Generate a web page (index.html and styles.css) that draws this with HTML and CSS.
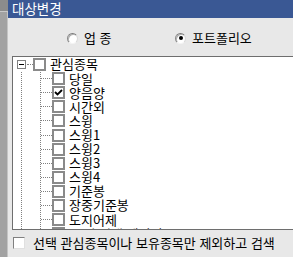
FILE: index.html
```html
<!DOCTYPE html>
<html lang="ko">
<head>
<meta charset="utf-8">
<link rel="stylesheet" href="styles.css">
</head>
<body>
<div class="screen">
  <div class="side"><div class="side-top"></div><div class="side-body"></div></div>
  <div class="dialog">
    <div class="titlebar">대상변경</div>
    <div class="radios">
      <label class="radio first"><span class="rb"></span><span class="rlbl">업 종</span></label>
      <label class="radio"><span class="rb on"></span><span class="rlbl">포트폴리오</span></label>
    </div>
    <div class="treebox">
      <div class="row top">
        <span class="expander"><span class="minus"></span></span>
        <span class="hconn short"></span>
        <span class="cb"></span>
        <span class="lbl">관심종목</span>
      </div>
      <div class="branch">
        <div class="trunk"></div>
        <div class="children">
          <div class="row"><span class="hconn"></span><span class="cb"></span><span class="lbl">당일</span></div>
          <div class="row"><span class="hconn"></span><span class="cb"><svg viewBox="0 0 9 9" width="9" height="9"><path d="M1 4 L3.5 6.5 L8 2" fill="none" stroke="#000" stroke-width="1.8"/></svg></span><span class="lbl">양음양</span></div>
          <div class="row"><span class="hconn"></span><span class="cb"></span><span class="lbl">시간외</span></div>
          <div class="row"><span class="hconn"></span><span class="cb"></span><span class="lbl">스윙</span></div>
          <div class="row"><span class="hconn"></span><span class="cb"></span><span class="lbl">스윙1</span></div>
          <div class="row"><span class="hconn"></span><span class="cb"></span><span class="lbl">스윙2</span></div>
          <div class="row"><span class="hconn"></span><span class="cb"></span><span class="lbl">스윙3</span></div>
          <div class="row"><span class="hconn"></span><span class="cb"></span><span class="lbl">스윙4</span></div>
          <div class="row"><span class="hconn"></span><span class="cb"></span><span class="lbl">기준봉</span></div>
          <div class="row"><span class="hconn"></span><span class="cb"></span><span class="lbl">장중기준봉</span></div>
          <div class="row"><span class="hconn"></span><span class="cb"></span><span class="lbl">도지어제</span></div>
          <div class="row"><span class="hconn"></span><span class="cb"></span><span class="lbl">30일 거래 데이터</span></div>
        </div>
      </div>
    </div>
    <div class="bottom">
      <span class="cb2"></span>
      <span class="blbl">선택 관심종목이나 보유종목만 제외하고 검색</span>
    </div>
  </div>
</div>
</body>
</html>
```
FILE: styles.css
```css
* { box-sizing: border-box; }
html, body { margin: 0; padding: 0; }
body {
  width: 293px;
  height: 257px;
  overflow: hidden;
  font-family: "Noto Sans CJK KR", "Noto Sans", sans-serif;
  font-size: 13px;
  color: #000;
  background: #e8e8e8;
}
.screen {
  display: flex;
  width: 293px;
  height: 257px;
  overflow: hidden;
}
.side {
  width: 8px;
  flex: none;
  display: flex;
  flex-direction: column;
}
.side-top {
  height: 12px;
  background: #8c8c8c;
  border-bottom: 1px solid #c8c8c8;
}
.side-body {
  flex: 1;
  background: #a2a2a2;
  border-right: 1px solid #c4c4c4;
}
.dialog {
  flex: 1;
  display: flex;
  flex-direction: column;
  background: #e8e8e8;
  min-width: 0;
}
.titlebar {
  height: 18px;
  flex: none;
  background: #3a5894;
  color: #fff;
  font-size: 13.5px;
  line-height: 17px;
  padding-left: 4px;
}
.radios {
  height: 38px;
  flex: none;
  display: flex;
  align-items: center;
  padding-left: 59px;
  padding-top: 2px;
}
.radio {
  display: flex;
  align-items: center;
  gap: 6px;
  line-height: 14px;
}
.radio.first { width: 108px; }
.rb {
  width: 11px;
  height: 11px;
  border-radius: 50%;
  background: #fff;
  border: 1px solid;
  border-color: #7a7a7a #d8d8d8 #f4f4f4 #8a8a8a;
  box-shadow: inset 1px 1px 0 #b0b0b0;
  display: flex;
  align-items: center;
  justify-content: center;
  flex: none;
}
.rb.on::after {
  content: "";
  width: 4px;
  height: 4px;
  border-radius: 50%;
  background: #000;
}
.treebox {
  height: 174px;
  flex: none;
  margin-left: 4px;
  margin-right: -10px;
  background: #fff;
  border-top: 1px solid #6e6e6e;
  border-left: 1px solid #6e6e6e;
  border-bottom: 1px solid #6e6e6e;
  overflow: hidden;
}
.row {
  height: 14.1px;
  display: flex;
  align-items: center;
  white-space: nowrap;
}
.row.top { padding-left: 4px; height: 14.6px; }
.expander {
  width: 9px;
  height: 9px;
  border: 1px solid #808080;
  background: #fff;
  display: flex;
  align-items: center;
  justify-content: center;
  flex: none;
}
.minus {
  width: 5px;
  height: 1px;
  background: #000;
}
.hconn {
  width: 11px;
  height: 0;
  border-top: 1px dotted #808080;
  flex: none;
}
.hconn.short { width: 6px; margin-left: 1px; }
.cb {
  width: 13px;
  height: 13px;
  border: 2px solid #8a8a8a;
  background: #fff;
  flex: none;
  display: flex;
  align-items: center;
  justify-content: center;
}
.lbl {
  margin-left: 4px;
  line-height: 14px;
}
.branch {
  display: flex;
}
.trunk {
  margin-left: 8px;
  width: 0;
  border-left: 1px dotted #808080;
}
.children {
  margin-left: 18px;
  border-left: 1px dotted #808080;
}
.bottom {
  flex: 1;
  display: flex;
  align-items: center;
  padding-left: 5px;
  padding-bottom: 1px;
}
.cb2 {
  width: 12px;
  height: 12px;
  background: #fff;
  border: 1px solid;
  border-color: #808080 #e0e0e0 #e0e0e0 #808080;
  flex: none;
}
.blbl {
  margin-left: 8px;
  line-height: 14px;
}
```
